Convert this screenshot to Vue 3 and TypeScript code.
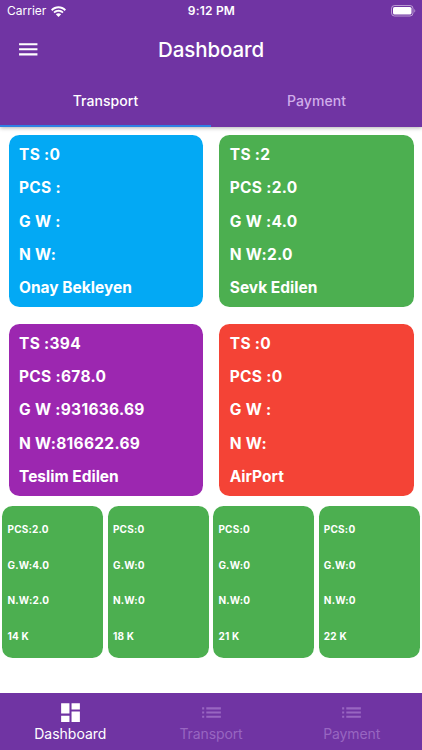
<script setup lang="ts">
interface Summary { color: string; lines: string[]; name: string }

const summaries: Summary[] = [
  { color: 'blue', lines: ['TS :0', 'PCS :', 'G W :', 'N W:'], name: 'Onay Bekleyen' },
  { color: 'green', lines: ['TS :2', 'PCS :2.0', 'G W :4.0', 'N W:2.0'], name: 'Sevk Edilen' },
  { color: 'purple', lines: ['TS :394', 'PCS :678.0', 'G W :931636.69', 'N W:816622.69'], name: 'Teslim Edilen' },
  { color: 'red', lines: ['TS :0', 'PCS :0', 'G W :', 'N W:'], name: 'AirPort' },
]

const karats: string[][] = [
  ['PCS:2.0', 'G.W:4.0', 'N.W:2.0', '14 K'],
  ['PCS:0', 'G.W:0', 'N.W:0', '18 K'],
  ['PCS:0', 'G.W:0', 'N.W:0', '21 K'],
  ['PCS:0', 'G.W:0', 'N.W:0', '22 K'],
]

const dashboardPath = 'M3 13h8V3H3v10zm0 8h8v-6H3v6zm10 0h8V11h-8v10zm0-18v6h8V3h-8z'
const listPath = 'M3 13h2v-2H3v2zm0 4h2v-2H3v2zm0-8h2V7H3v2zm4 4h14v-2H7v2zm0 4h14v-2H7v2zM7 7v2h14V7H7z'
const navItems = [
  { label: 'Dashboard', icon: dashboardPath, active: true },
  { label: 'Transport', icon: listPath, active: false },
  { label: 'Payment', icon: listPath, active: false },
]
</script>

<template>
  <div class="screen">
    <header class="header">
      <div class="status">
        <div class="carrier">
          <span>Carrier</span>
          <svg class="wifi" viewBox="0 0 15 11">
            <path d="M0 3.500C4.200-.8 10.800-.8 15 3.500L13.600 4.900C10.200 1.500 4.800 1.500 1.400 4.900z" />
            <path d="M2.400 5.900C5.200 3.100 9.800 3.100 12.600 5.900L11.200 7.300C9.200 5.300 5.800 5.300 3.800 7.300z" />
            <path d="M4.800 8.300C6.300 6.900 8.700 6.900 10.200 8.300L7.500 11z" />
          </svg>
        </div>
        <span class="clock">9:12 PM</span>
        <svg class="battery" viewBox="0 0 25 12">
          <rect x=".5" y=".5" width="21.500" height="10.500" rx="3" fill="none" stroke="#fff" stroke-opacity=".5" />
          <rect x="2" y="2" width="18.500" height="7.500" rx="1.600" fill="#fff" />
          <path d="M23.300 4v3.600c1.300-.5 1.300-3.100 0-3.600z" fill="#fff" fill-opacity=".5" />
        </svg>
      </div>
      <div class="toolbar">
        <svg class="menu" viewBox="0 0 24 24"><path d="M3 18h18v-2H3v2zm0-5h18v-2H3v2zm0-7v2h18V6H3z" /></svg>
        <h1>Dashboard</h1>
        <span></span>
      </div>
      <div class="tabs">
        <div class="tab active">Transport</div>
        <div class="tab">Payment</div>
      </div>
    </header>
    <main>
      <section class="summaries">
        <article v-for="card in summaries" :key="card.name" class="card" :class="card.color">
          <p v-for="line in card.lines" :key="line">{{ line }}</p>
          <p class="name">{{ card.name }}</p>
        </article>
      </section>
      <section class="karats">
        <article v-for="(lines, i) in karats" :key="i" class="karat">
          <p v-for="line in lines" :key="line">{{ line }}</p>
        </article>
      </section>
    </main>
    <nav class="bottom">
      <div v-for="item in navItems" :key="item.label" class="nav-item" :class="{ active: item.active }">
        <svg viewBox="0 0 24 24"><path :d="item.icon" /></svg>
        <span>{{ item.label }}</span>
      </div>
    </nav>
  </div>
</template>

<style>
body { margin: 0; background: #fff; }
</style>

<style scoped>
.screen {
  width: 422px;
  height: 750px;
  display: flex;
  flex-direction: column;
  overflow: hidden;
  font-family: Inter, "Liberation Sans", sans-serif;
  color: #fff;
}
p, h1 { margin: 0; }
svg { display: block; fill: currentColor; }
.header {
  height: 126.500px;
  flex: none;
  background: #7034a3;
  box-shadow: 0 1px 4px rgba(0, 0, 0, .3);
}
.status {
  height: 22px;
  padding: 0 6px 0 7px;
  display: grid;
  grid-template-columns: 1fr auto 1fr;
  align-items: center;
  font-size: 12px;
  line-height: 22px;
}
.carrier { display: flex; gap: 4.500px; align-items: center; }
.wifi { width: 15px; height: 11px; }
.clock { font-weight: 600; letter-spacing: .2px; }
.battery { width: 25px; height: 12px; justify-self: end; }
.toolbar {
  height: 55px;
  padding: 0 16.200px;
  display: grid;
  grid-template-columns: 1fr auto 1fr;
  align-items: center;
}
.menu { width: 24.500px; height: 24.500px; }
h1 { font-size: 20.500px; font-weight: 500; letter-spacing: -.1px; line-height: 28px; }
.tabs { height: 49.500px; display: flex; }
.tab {
  flex: 1;
  box-sizing: border-box;
  border-bottom: 2px solid transparent;
  text-align: center;
  line-height: 48px;
  font-size: 14px;
  font-weight: 500;
  letter-spacing: .05px;
  color: #d0aeea;
}
.tab.active { color: #fff; border-color: #2f80e4; }
main { flex: 1; }
.summaries {
  padding: 8.200px 8.500px 0;
  display: grid;
  grid-template-columns: 1fr 1fr;
  gap: 16.500px;
}
.card {
  height: 172.400px;
  box-sizing: border-box;
  border-radius: 10.500px;
  padding: 3px 10.500px 0;
  font-size: 15.500px;
  font-weight: 700;
  letter-spacing: .3px;
  line-height: 33.400px;
}
.name { letter-spacing: 0; }
.blue { background: #03a9f4; }
.green, .karat { background: #4caf50; }
.purple { background: #9c27b0; }
.red { background: #f44336; }
.karats {
  padding: 10px 2.200px 0;
  display: grid;
  grid-template-columns: repeat(4, 1fr);
  gap: 4.200px;
}
.karat {
  height: 152.500px;
  box-sizing: border-box;
  border-radius: 10.500px;
  padding: 6px 5.300px 0;
  font-size: 10px;
  font-weight: 700;
  letter-spacing: .2px;
  line-height: 35.700px;
}
.bottom {
  height: 57.500px;
  flex: none;
  box-sizing: border-box;
  padding-top: 7.500px;
  display: flex;
  background: #7034a3;
}
.nav-item {
  flex: 1;
  display: flex;
  flex-direction: column;
  align-items: center;
  color: #9866c1;
  font-size: 14px;
  line-height: 18px;
  letter-spacing: -.1px;
}
.nav-item svg { width: 25px; height: 25px; }
.nav-item.active { color: #fff; letter-spacing: 0; }
</style>
